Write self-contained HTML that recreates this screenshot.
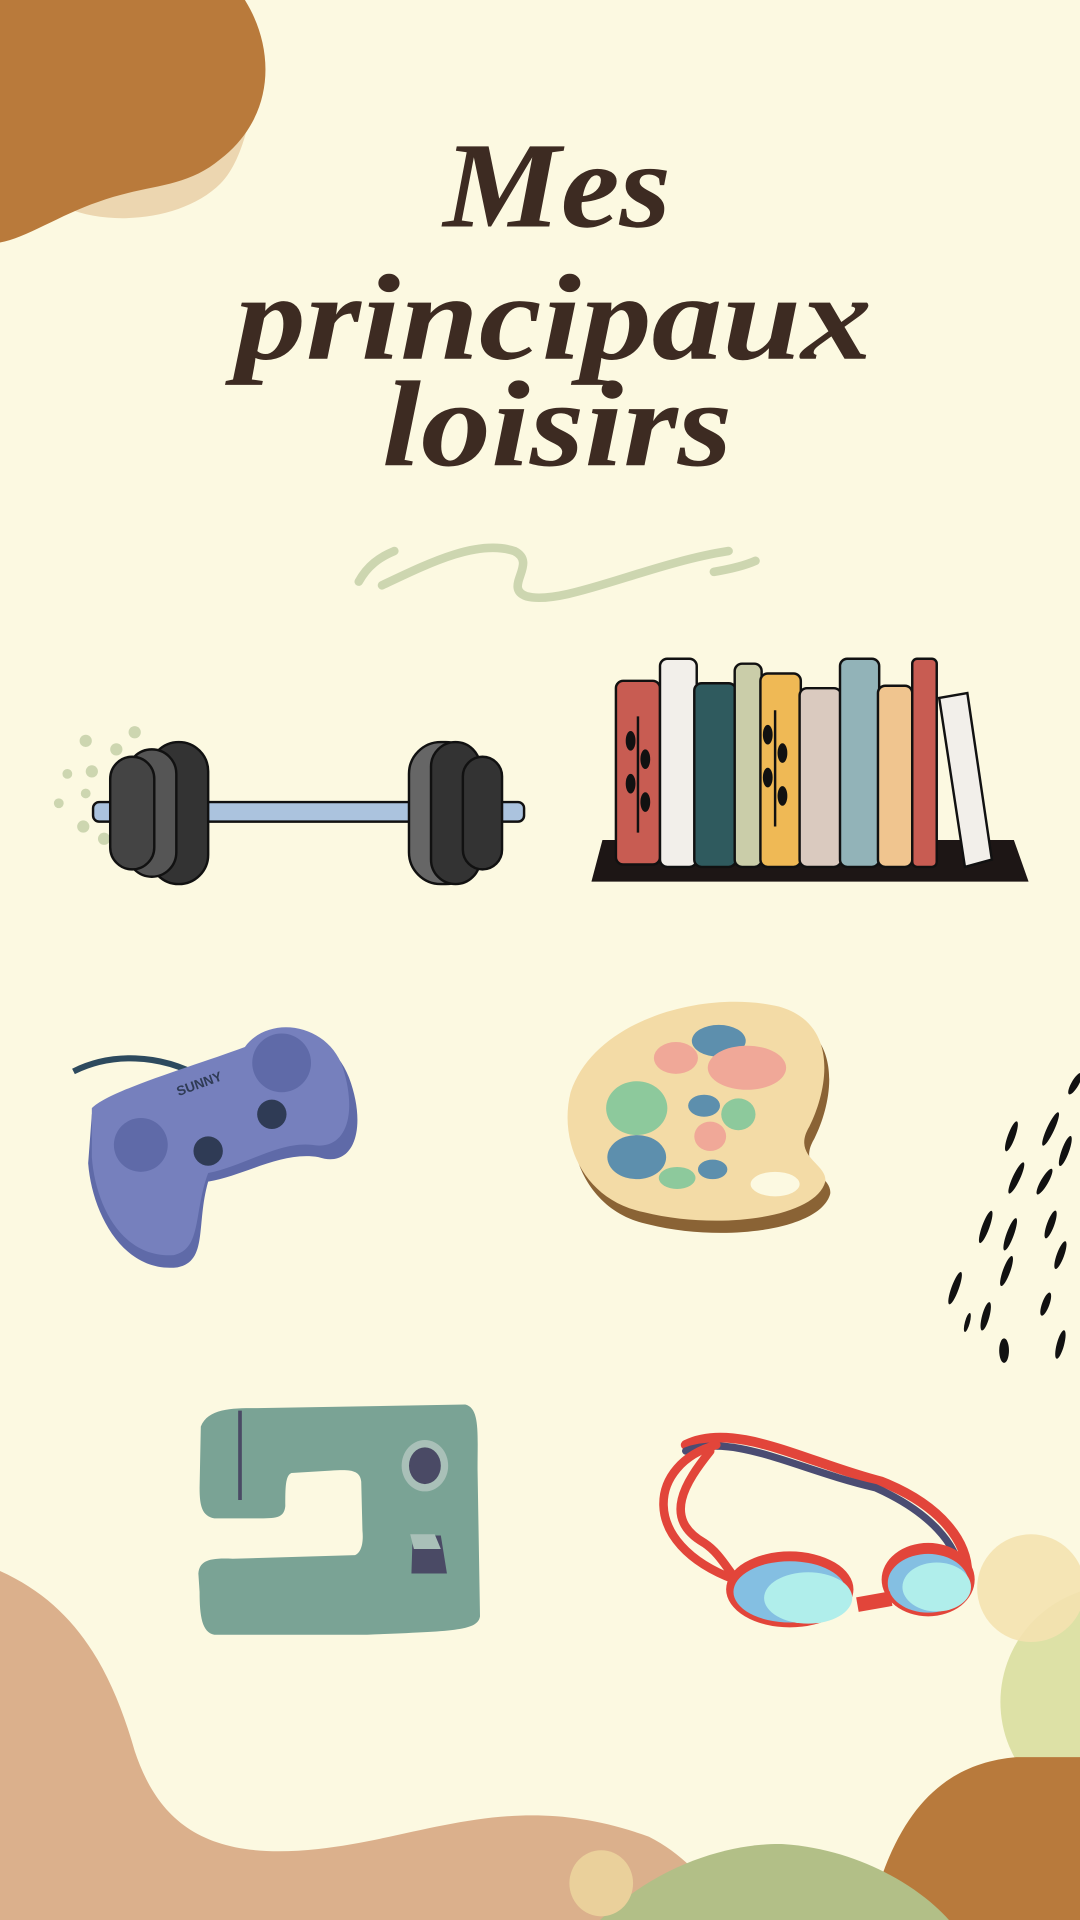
<!DOCTYPE html>
<html><head><meta charset="utf-8"><style>
html,body{margin:0;padding:0;background:#fcf9e1;}
svg{display:block;}
</style></head><body>
<svg width="1080" height="1920" viewBox="0 0 882 1568" xmlns="http://www.w3.org/2000/svg">
<rect width="882" height="1568" fill="#fcf9e1"/>
<path d="M0 0 H200 C215 30 210 120 180 150 C150 180 90 185 55 170 L0 190 Z" fill="#ecd6b0"/>
<path d="M0 0 H200 C225 40 225 95 180 130 C150 155 120 150 80 165 C50 175 20 195 0 198 Z" fill="#b97a3b"/>
<path d="M0 1283 C60 1310 90 1360 110 1430 C130 1490 170 1520 260 1510 C350 1500 420 1460 530 1500 C560 1515 580 1540 600 1568 H0 Z" fill="#dbb08c"/>
<circle cx="912" cy="1390" r="95" fill="#dde1a6"/>
<circle cx="842" cy="1297" r="44" fill="#f4e2b0" opacity="0.9"/>
<path d="M710 1568 C730 1480 770 1440 830 1435 H882 V1568 Z" fill="#b87a3c"/>
<path d="M490 1568 C540 1520 600 1505 640 1506 C700 1510 750 1540 775 1568 Z" fill="#b2bf87"/>
<ellipse cx="491" cy="1538" rx="26" ry="27" fill="#ead09b"/>
<g font-family="'Liberation Serif',serif" font-weight="bold" font-style="italic" fill="#3d2b22">
<text x="362" y="185" font-size="100" textLength="186" lengthAdjust="spacingAndGlyphs">Mes</text>
<text x="192" y="293" font-size="100" textLength="520" lengthAdjust="spacingAndGlyphs">principaux</text>
<text x="312" y="380" font-size="100" textLength="286" lengthAdjust="spacingAndGlyphs">loisirs</text>
</g>
<g fill="none" stroke="#cdd6b0" stroke-width="7" stroke-linecap="round">
<path d="M293 475 C300 462 310 455 322 450"/>
<path d="M312 478 C350 460 390 440 420 450 C440 460 410 480 430 487 C460 495 530 460 595 450"/>
<path d="M583 467 C595 465 608 462 617 458"/>
</g>
<g fill="#cdd6b0"><circle cx="70" cy="605" r="5"/><circle cx="55" cy="632" r="4"/><circle cx="75" cy="630" r="5"/><circle cx="48" cy="656" r="4"/><circle cx="68" cy="675" r="5"/><circle cx="85" cy="685" r="5"/><circle cx="95" cy="612" r="5"/><circle cx="110" cy="598" r="5"/><circle cx="70" cy="648" r="4"/></g>
<rect x="76" y="655" width="352" height="16" rx="5" fill="#abc3de" stroke="#111" stroke-width="2"/>
<g stroke="#111" stroke-width="2">
<rect x="122" y="606" width="48" height="116" rx="24" fill="#333"/>
<rect x="104" y="612" width="40" height="104" rx="20" fill="#555"/>
<rect x="90" y="618" width="36" height="92" rx="18" fill="#444"/>
<rect x="334" y="606" width="56" height="116" rx="26" fill="#666"/>
<rect x="352" y="606" width="40" height="116" rx="20" fill="#333"/>
<rect x="378" y="618" width="32" height="92" rx="16" fill="#333"/>
</g>
<path d="M492 686 H828 L840 720 H483 Z" fill="#1d1615"/>
<g stroke="#111" stroke-width="2">
<rect x="503" y="556" width="36" height="150" rx="6" fill="#c85c52"/>
<rect x="539" y="538" width="30" height="170" rx="6" fill="#f2efea"/>
<rect x="567" y="558" width="34" height="150" rx="6" fill="#2f5a5e"/>
<rect x="600" y="542" width="22" height="166" rx="6" fill="#cacda9"/>
<rect x="621" y="550" width="33" height="158" rx="6" fill="#efb955"/>
<rect x="653" y="562" width="34" height="146" rx="6" fill="#dacabf"/>
<rect x="686" y="538" width="32" height="170" rx="6" fill="#92b3b8"/>
<rect x="717" y="560" width="28" height="148" rx="6" fill="#f0c58f"/>
<rect x="745" y="538" width="20" height="170" rx="4" fill="#c85c52"/>
<path d="M767 570 L790 566 L810 702 L788 708 Z" fill="#f2efea"/>
</g>
<g stroke="#111" stroke-width="2" fill="none"><path d="M521 585 V680 M633 580 V675"/></g>
<g fill="#111"><ellipse cx="515" cy="605" rx="4" ry="8"/><ellipse cx="527" cy="620" rx="4" ry="8"/><ellipse cx="515" cy="640" rx="4" ry="8"/><ellipse cx="527" cy="655" rx="4" ry="8"/><ellipse cx="627" cy="600" rx="4" ry="8"/><ellipse cx="639" cy="615" rx="4" ry="8"/><ellipse cx="627" cy="635" rx="4" ry="8"/><ellipse cx="639" cy="650" rx="4" ry="8"/></g>
<path d="M60 875 C90 860 130 860 165 880" stroke="#2d4a5e" stroke-width="5" fill="none"/>
<path d="M75 910 C90 895 160 875 200 860 C220 830 270 840 285 880 C300 920 290 955 260 945 C230 940 200 960 170 965 C160 1000 170 1030 145 1035 C100 1040 75 990 72 950 Z" fill="#5f6aa8"/>
<path d="M75 905 C90 890 160 870 200 855 C220 828 268 836 280 872 C292 910 283 940 255 935 C228 932 200 952 170 958 C158 990 165 1020 142 1025 C100 1028 78 985 75 945 Z" fill="#7680bd"/>
<circle cx="115" cy="935" r="22" fill="#5f6aa8"/><circle cx="230" cy="868" r="24" fill="#5f6aa8"/>
<circle cx="170" cy="940" r="12" fill="#2f3b55"/><circle cx="222" cy="910" r="12" fill="#2f3b55"/>
<text x="145" y="890" font-family="'Liberation Sans',sans-serif" font-size="11" font-weight="bold" fill="#2f3b55" transform="rotate(-20 160 890)">SUNNY</text>
<path d="M470 900 C490 840 580 815 640 830 C690 845 680 900 665 930 C650 955 680 960 678 975 C670 1005 590 1015 530 1000 C480 990 460 940 470 900 Z" fill="#8a6335"/>
<path d="M466 892 C486 832 576 808 636 822 C686 836 676 890 661 920 C646 945 676 950 674 965 C666 995 586 1005 526 990 C476 980 456 932 466 892 Z" fill="#f3dba6"/>
<ellipse cx="633" cy="967" rx="20" ry="10" fill="#fcf9e1"/>
<ellipse cx="587" cy="850" rx="22" ry="13" fill="#5d8fad"/>
<ellipse cx="552" cy="864" rx="18" ry="13" fill="#f0a898"/>
<ellipse cx="610" cy="872" rx="32" ry="18" fill="#f0a898"/>
<ellipse cx="520" cy="905" rx="25" ry="22" fill="#8dc99c"/>
<ellipse cx="520" cy="945" rx="24" ry="18" fill="#5d8fad"/>
<ellipse cx="575" cy="903" rx="13" ry="9" fill="#5d8fad"/>
<ellipse cx="603" cy="910" rx="14" ry="13" fill="#8dc99c"/>
<ellipse cx="580" cy="928" rx="13" ry="12" fill="#f0a898"/>
<ellipse cx="582" cy="955" rx="12" ry="8" fill="#5d8fad"/>
<ellipse cx="553" cy="962" rx="15" ry="9" fill="#8dc99c"/>
<g fill="#111">
<ellipse cx="878" cy="885" rx="3" ry="10" transform="rotate(30 878 885)"/>
<ellipse cx="826" cy="928" rx="3" ry="13" transform="rotate(20 826 928)"/>
<ellipse cx="858" cy="922" rx="3" ry="15" transform="rotate(25 858 922)"/>
<ellipse cx="870" cy="940" rx="3" ry="13" transform="rotate(20 870 940)"/>
<ellipse cx="830" cy="962" rx="3" ry="14" transform="rotate(25 830 962)"/>
<ellipse cx="853" cy="965" rx="3" ry="12" transform="rotate(30 853 965)"/>
<ellipse cx="805" cy="1002" rx="3" ry="14" transform="rotate(20 805 1002)"/>
<ellipse cx="825" cy="1008" rx="3" ry="14" transform="rotate(20 825 1008)"/>
<ellipse cx="858" cy="1000" rx="3" ry="12" transform="rotate(20 858 1000)"/>
<ellipse cx="822" cy="1038" rx="3" ry="13" transform="rotate(20 822 1038)"/>
<ellipse cx="866" cy="1025" rx="3" ry="12" transform="rotate(20 866 1025)"/>
<ellipse cx="780" cy="1052" rx="3" ry="14" transform="rotate(20 780 1052)"/>
<ellipse cx="854" cy="1065" rx="3" ry="10" transform="rotate(20 854 1065)"/>
<ellipse cx="805" cy="1075" rx="3" ry="12" transform="rotate(15 805 1075)"/>
<ellipse cx="790" cy="1080" rx="2" ry="8" transform="rotate(15 790 1080)"/>
<ellipse cx="820" cy="1103" rx="4" ry="10"/>
<ellipse cx="866" cy="1098" rx="3" ry="12" transform="rotate(15 866 1098)"/>
</g>
<path d="M164 1165 C170 1150 190 1150 210 1150 L380 1147 C392 1150 390 1170 390 1200 L392 1320 C390 1332 370 1332 300 1335 L175 1335 C165 1333 163 1320 163 1300 L162 1285 C163 1275 170 1272 190 1273 L290 1270 C295 1268 297 1260 296 1250 L295 1210 C294 1200 285 1200 270 1201 L238 1203 C233 1205 233 1215 233 1230 C232 1240 225 1240 210 1240 L175 1240 C165 1238 163 1230 163 1215 Z" fill="#7aa395"/>
<ellipse cx="347" cy="1197" rx="19" ry="21" fill="#a9c0b8"/>
<ellipse cx="347" cy="1197" rx="13" ry="15" fill="#4a4a65"/>
<path d="M337 1254 H360 L365 1285 H336 Z" fill="#4a4a65"/>
<path d="M335 1253 H355 L360 1265 H338 Z" fill="#a9c0b8"/>
<path d="M196 1152 V1225" stroke="#4a4a65" stroke-width="3"/>
<g fill="none" stroke-linecap="round">
<path d="M560 1180 C600 1160 660 1195 720 1210 C770 1230 790 1260 790 1285" stroke="#e2453a" stroke-width="8"/>
<path d="M560 1185 C600 1170 650 1200 715 1215 C760 1235 782 1262 784 1285" stroke="#4a4c72" stroke-width="6"/>
<path d="M585 1180 C530 1195 520 1260 600 1290" stroke="#e2453a" stroke-width="7"/>
<path d="M580 1185 C560 1210 540 1240 575 1260 C590 1270 595 1285 610 1300" stroke="#e2453a" stroke-width="7"/>
</g>
<ellipse cx="645" cy="1298" rx="52" ry="31" fill="#e2453a"/>
<ellipse cx="645" cy="1300" rx="46" ry="25" fill="#84bfe2"/>
<ellipse cx="660" cy="1305" rx="36" ry="21" fill="#b0eeeb"/>
<ellipse cx="758" cy="1290" rx="38" ry="30" fill="#e2453a"/>
<ellipse cx="758" cy="1293" rx="33" ry="24" fill="#84bfe2"/>
<ellipse cx="765" cy="1296" rx="28" ry="20" fill="#b0eeeb"/>
<rect x="700" y="1302" width="28" height="12" fill="#e2453a" transform="rotate(-10 714 1308)"/>
</svg>
</body></html>
